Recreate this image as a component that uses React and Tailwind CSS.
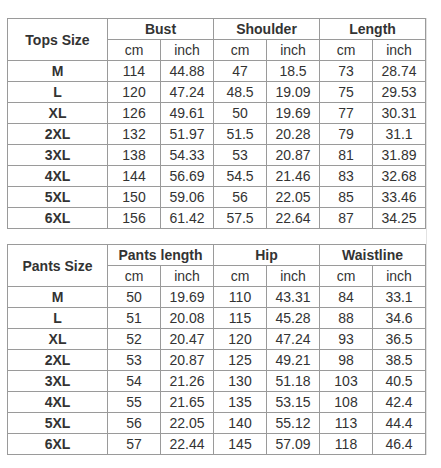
const tops = {
  label: "Tops Size",
  groups: ["Bust", "Shoulder", "Length"],
  rows: [
    ["M", "114", "44.88", "47", "18.5", "73", "28.74"],
    ["L", "120", "47.24", "48.5", "19.09", "75", "29.53"],
    ["XL", "126", "49.61", "50", "19.69", "77", "30.31"],
    ["2XL", "132", "51.97", "51.5", "20.28", "79", "31.1"],
    ["3XL", "138", "54.33", "53", "20.87", "81", "31.89"],
    ["4XL", "144", "56.69", "54.5", "21.46", "83", "32.68"],
    ["5XL", "150", "59.06", "56", "22.05", "85", "33.46"],
    ["6XL", "156", "61.42", "57.5", "22.64", "87", "34.25"],
  ],
};

const pants = {
  label: "Pants Size",
  groups: ["Pants length", "Hip", "Waistline"],
  rows: [
    ["M", "50", "19.69", "110", "43.31", "84", "33.1"],
    ["L", "51", "20.08", "115", "45.28", "88", "34.6"],
    ["XL", "52", "20.47", "120", "47.24", "93", "36.5"],
    ["2XL", "53", "20.87", "125", "49.21", "98", "38.5"],
    ["3XL", "54", "21.26", "130", "51.18", "103", "40.5"],
    ["4XL", "55", "21.65", "135", "53.15", "108", "42.4"],
    ["5XL", "56", "22.05", "140", "55.12", "113", "44.4"],
    ["6XL", "57", "22.44", "145", "57.09", "118", "46.4"],
  ],
};

const cell = "border border-[#9a9a9a] h-[21px] p-0 text-center leading-[20px]";

function SizeTable({ data }) {
  return (
    <table className="table-fixed border-collapse w-[419px] text-[14px] text-[#333]">
      <colgroup>
        <col className="w-[100px]" />
        {[0, 1, 2, 3, 4, 5].map((i) => (
          <col key={i} className="w-[53px]" />
        ))}
      </colgroup>
      <tbody>
        <tr>
          <td rowSpan={2} className={cell + " font-bold"}>
            {data.label}
          </td>
          {data.groups.map((g) => (
            <td key={g} colSpan={2} className={cell + " font-bold"}>
              {g}
            </td>
          ))}
        </tr>
        <tr>
          {data.groups.map((g) => [
            <td key={g + "cm"} className={cell}>cm</td>,
            <td key={g + "in"} className={cell}>inch</td>,
          ])}
        </tr>
        {data.rows.map((r) => (
          <tr key={r[0]}>
            {r.map((v, i) => (
              <td key={i} className={cell + (i === 0 ? " font-bold" : "")}>
                {v}
              </td>
            ))}
          </tr>
        ))}
      </tbody>
    </table>
  );
}

export default function App() {
  return (
    <div className="w-[441px] h-[468px] bg-white pt-[18px] pl-[7px] font-['Liberation_Sans',Arial,sans-serif]">
      <div className="w-[420px] border-r border-[#e2e2e2] flex flex-col gap-[15px]">
        <SizeTable data={tops} />
        <SizeTable data={pants} />
      </div>
    </div>
  );
}
